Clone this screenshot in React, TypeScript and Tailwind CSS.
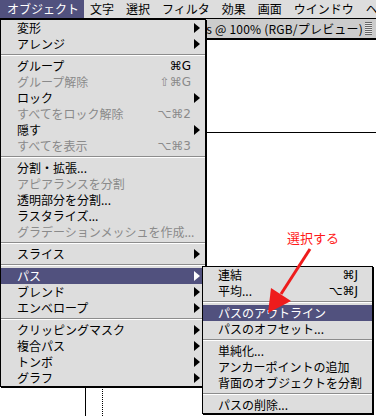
import type { ReactNode } from 'react';

type Entry =
  | { label: string; keys?: string; sub?: boolean; disabled?: boolean; active?: boolean }
  | 'sep';

const objectMenu: Entry[] = [
  { label: '変形', sub: true },
  { label: 'アレンジ', sub: true },
  'sep',
  { label: 'グループ', keys: '⌘G' },
  { label: 'グループ解除', keys: '⇧⌘G', disabled: true },
  { label: 'ロック', sub: true },
  { label: 'すべてをロック解除', keys: '⌥⌘2', disabled: true },
  { label: '隠す', sub: true },
  { label: 'すべてを表示', keys: '⌥⌘3', disabled: true },
  'sep',
  { label: '分割・拡張...' },
  { label: 'アピアランスを分割', disabled: true },
  { label: '透明部分を分割...' },
  { label: 'ラスタライズ...' },
  { label: 'グラデーションメッシュを作成...', disabled: true },
  'sep',
  { label: 'スライス', sub: true },
  'sep',
  { label: 'パス', sub: true, active: true },
  { label: 'ブレンド', sub: true },
  { label: 'エンベロープ', sub: true },
  'sep',
  { label: 'クリッピングマスク', sub: true },
  { label: '複合パス', sub: true },
  { label: 'トンボ', sub: true },
  { label: 'グラフ', sub: true },
];

const pathMenu: Entry[] = [
  { label: '連結', keys: '⌘J' },
  { label: '平均...', keys: '⌥⌘J' },
  'sep',
  { label: 'パスのアウトライン', active: true },
  { label: 'パスのオフセット...' },
  'sep',
  { label: '単純化...' },
  { label: 'アンカーポイントの追加' },
  { label: '背面のオブジェクトを分割' },
  'sep',
  { label: 'パスの削除...' },
];

const menuBar = ['オブジェクト', '文字', '選択', 'フィルタ', '効果', '画面', 'ウインドウ', 'ヘルプ'];

// submenu triangle
const Caret = ({ white }: { white?: boolean }) => (
  <svg width="6" height="10" viewBox="0 0 6 10" className="block">
    <polygon points="0,0 6,5 0,10" fill={white ? '#fff' : '#000'} />
  </svg>
);

const Separator = () => (
  <div className="h-[6px] flex flex-col justify-center">
    <div className="h-px bg-[#8c8c8c]" />
    <div className="h-px bg-white" />
  </div>
);

const MenuRow = ({ entry, caretSlot }: { entry: Exclude<Entry, 'sep'>; caretSlot: boolean }) => {
  const tone = entry.active ? 'bg-[#51517e] text-white' : entry.disabled ? 'text-[#8a8a8a]' : 'text-black';
  return (
    <div className={`h-4 flex items-center whitespace-nowrap ${tone}`}>
      <span className="flex-1">{entry.label}</span>
      {entry.keys && <span className="font-['DejaVu_Sans','Noto_Sans_CJK_JP',sans-serif] text-[12px]">{entry.keys}</span>}
      {caretSlot && (
        <span className="w-[9px] flex justify-end">{entry.sub && <Caret white={entry.active} />}</span>
      )}
    </div>
  );
};

const Menu = ({ items, className, rowPad, caretSlot }: { items: Entry[]; className: string; rowPad: string; caretSlot: boolean }) => (
  <div className={`absolute bg-[#dddddd] border border-black shadow-[1px_1px_0_#000] text-[12px] leading-4 ${className}`}>
    {items.map((it, i): ReactNode =>
      it === 'sep' ? (
        <Separator key={i} />
      ) : (
        <div key={i} className={it.active ? 'bg-[#51517e]' : ''}>
          <div className={rowPad}>
            <MenuRow entry={it} caretSlot={caretSlot} />
          </div>
        </div>
      ),
    )}
  </div>
);

export default function App() {
  return (
    <div className="relative w-[376px] h-[416px] overflow-hidden bg-white flex flex-col font-['Noto_Sans_CJK_JP','DejaVu_Sans',sans-serif] text-black">
      {/* menu bar */}
      <div className="h-[19px] shrink-0 bg-[#dddddd] border-b border-black flex items-stretch whitespace-nowrap text-[12px] leading-[18px]">
        {menuBar.map((m, i) =>
          i === 0 ? (
            <div key={m} className="pl-[7px] pr-[5px] bg-[#51517e] text-white">{m}</div>
          ) : (
            <div key={m} className="px-[6px] shrink-0">{m}</div>
          ),
        )}
      </div>

      {/* document window */}
      <div className="flex-1 flex flex-col">
        <div className="h-[21px] shrink-0 bg-[#cccccc] border-b-2 border-black flex items-center justify-end pr-[4px] text-[12px] whitespace-nowrap">
          <span className="tracking-[0.2px]">s @ 100% (RGB/プレビュー)</span>
          <span className="ml-[2px] w-[7px] h-[13px] bg-[repeating-linear-gradient(to_bottom,#666_0,#666_1px,#e6e6e6_1px,#e6e6e6_2px)]" />
        </div>
        <div className="relative flex-1 bg-white">
          <div className="absolute left-0 right-0 top-[92px] h-px bg-black" />
          <div className="absolute left-[85px] top-[92px] bottom-0 w-px bg-black" />
          <div className="absolute left-[102px] top-[92px] bottom-0 border-l border-dotted border-black" />
        </div>
      </div>

      {/* オブジェクト menu */}
      <Menu items={objectMenu} className="left-0 top-[19px] w-[206px]" rowPad="pl-[16px] pr-[5px]" caretSlot />

      {/* パス submenu */}
      <Menu items={pathMenu} className="left-[202px] top-[266px] w-[171px]" rowPad="pl-[15px] pr-[14px]" caretSlot={false} />

      {/* annotation */}
      <div className="absolute left-[287px] top-[231px] text-[13px] leading-[14px] text-[#ff1a1a] whitespace-nowrap">選択する</div>
      <svg className="absolute left-0 top-0 pointer-events-none" width="376" height="416" viewBox="0 0 376 416">
        <line x1="310" y1="249" x2="281" y2="294" stroke="#ee1c1c" strokeWidth="3" />
        <polygon points="268,313 271,288 291,301" fill="#ee1c1c" />
      </svg>
    </div>
  );
}
